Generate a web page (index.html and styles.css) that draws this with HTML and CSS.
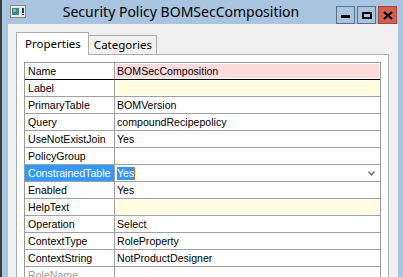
FILE: index.html
```html
<html lang="en">
<head>
    <meta charset="UTF-8">
    <title>Security Policy BOMSecComposition</title>
    <link rel="stylesheet" href="styles.css">
</head>
<body>
    <div class="frame">
        <div class="titlebar">
            <svg class="app-icon" width="16" height="13" viewBox="0 0 16 13">
                <rect x="0.5" y="0.5" width="15" height="12" fill="#e8e8e8" stroke="#8a8a8a"/>
                <rect x="2" y="3" width="7" height="7" fill="#3f8a86"/>
                <rect x="3" y="4" width="3" height="3" fill="#7cc0a8"/>
                <rect x="12" y="3" width="2" height="5" fill="#1f3f3a"/>
                <rect x="12" y="9" width="2" height="1" fill="#1f3f3a"/>
            </svg>
            <div class="title">Security Policy BOMSecComposition</div>
            <div class="caption-btns">
                <div class="cap-btn"><span class="glyph-min"></span></div>
                <div class="cap-btn"><span class="glyph-max"></span></div>
                <div class="cap-btn close">
                    <svg width="10" height="9" viewBox="0 0 10 9">
                        <path d="M1 1 L9 8 M9 1 L1 8" stroke="#000" stroke-width="2.2"/>
                    </svg>
                </div>
            </div>
        </div>

        <div class="client">
            <div class="tabs">
                <div class="tab active">Properties</div>
                <div class="tab">Categories</div>
            </div>
            <div class="tab-page">
                <div class="props">
                    <div class="key focus">Name</div>
                    <div class="val required focus">BOMSecComposition</div>
                    <div class="key">Label</div>
                    <div class="val optional"></div>
                    <div class="key">PrimaryTable</div>
                    <div class="val">BOMVersion</div>
                    <div class="key">Query</div>
                    <div class="val">compoundRecipepolicy</div>
                    <div class="key">UseNotExistJoin</div>
                    <div class="val">Yes</div>
                    <div class="key">PolicyGroup</div>
                    <div class="val"></div>
                    <div class="key selected">ConstrainedTable</div>
                    <div class="val combo">
                        <span class="sel-text">Yes</span><span class="caret"></span>
                        <svg class="chevron" width="7" height="5" viewBox="0 0 7 5">
                            <path d="M0.5 0.5 L3.5 4 L6.5 0.5" fill="none" stroke="#6d6d6d" stroke-width="1.4"/>
                        </svg>
                    </div>
                    <div class="key">Enabled</div>
                    <div class="val">Yes</div>
                    <div class="key">HelpText</div>
                    <div class="val optional"></div>
                    <div class="key">Operation</div>
                    <div class="val">Select</div>
                    <div class="key">ContextType</div>
                    <div class="val">RoleProperty</div>
                    <div class="key">ContextString</div>
                    <div class="val">NotProductDesigner</div>
                    <div class="key disabled">RoleName</div>
                    <div class="val"></div>
                </div>
            </div>
        </div>
    </div>
</body>
</html>
```

FILE: styles.css
```css
* {
    margin: 0;
    padding: 0;
    box-sizing: border-box;
}

body {
    background-color: #a8c4de;
    overflow: hidden;
}

.frame {
    height: 277px;
    border-left: 2px solid #3c3c3c;
    display: flex;
    flex-direction: column;
}

.titlebar {
    height: 27px;
    display: flex;
    align-items: center;
    padding-left: 8px;
}

.app-icon {
    flex-shrink: 0;
    margin-top: -2px;
}

.title {
    flex: 1;
    text-align: center;
    font-family: 'Noto Sans', sans-serif;
    font-size: 14px;
    color: #000;
    margin-top: -2px;
}

.caption-btns {
    display: flex;
    gap: 2px;
    align-self: flex-start;
    margin-top: 6px;
    margin-right: 6px;
}

.cap-btn {
    width: 19px;
    height: 18px;
    border: 1px solid #5b6f87;
    display: flex;
    align-items: center;
    justify-content: center;
}

.cap-btn.close {
    background-color: #d0604d;
    border-color: #a2453a;
}

.glyph-min {
    width: 9px;
    height: 3px;
    background-color: #000;
    margin-top: 3px;
}

.glyph-max {
    width: 10px;
    height: 7px;
    border: 2px solid #000;
}

.client {
    flex: 1;
    background-color: #f0f0f0;
    margin: 0 5px 0 6px;
    padding: 8px 9px 0 8px;
    display: flex;
    flex-direction: column;
}

.tabs {
    display: flex;
    align-items: flex-end;
    margin-bottom: -1px;
    font-family: 'Noto Sans', sans-serif;
    font-size: 11.5px;
}

.tab {
    height: 20px;
    border: 1px solid #adadad;
    border-bottom: none;
    background-color: #f0f0f0;
    padding: 1px 4px 0 5px;
    margin-left: -1px;
}

.tab.active {
    height: 23px;
    margin-left: 0;
    background-color: #fff;
    padding: 3px 7px 0 8px;
    position: relative;
    z-index: 1;
}

.tab-page {
    flex: 1;
    background-color: #fff;
    border: 1px solid #adadad;
    border-bottom: none;
    padding: 7px 7px 0 7px;
}

.props {
    display: grid;
    grid-template-columns: 90px 1fr;
    border: 1px solid #9a9a9a;
    border-bottom: none;
    font-family: 'Liberation Sans', Arial, sans-serif;
    font-size: 10.6px;
    color: #000;
}

.key,
.val {
    height: 17px;
    line-height: 16px;
    border-bottom: 1px solid #a0a0a0;
    white-space: nowrap;
    overflow: hidden;
}

.key {
    border-right: 1px solid #a0a0a0;
    padding-left: 3px;
}

.val {
    padding-left: 2px;
}

.focus {
    border-bottom-color: #000;
}

.required {
    background-color: #ffdcdc;
    box-shadow: inset 0 0 0 1px #fff;
}

.optional {
    background-color: #fffde1;
    box-shadow: inset 0 0 0 1px #fff;
}

.selected {
    background-color: #3399ff;
    color: #fff;
}

.disabled {
    color: #9a9a9a;
}

.combo {
    display: flex;
    align-items: center;
}

.sel-text {
    background-color: #3399ff;
    color: #fff;
    line-height: 13px;
}

.caret {
    width: 1px;
    height: 13px;
    background-color: #e0701f;
}

.chevron {
    margin-left: auto;
    margin-right: 5px;
}
```
